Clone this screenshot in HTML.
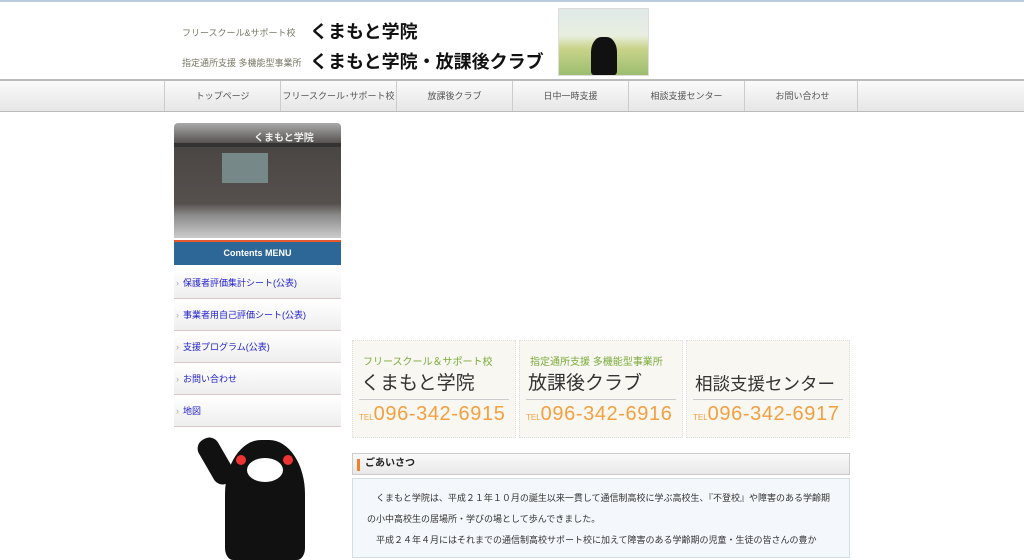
<!DOCTYPE html>
<html><head><meta charset="utf-8"><style>
*{margin:0;padding:0;box-sizing:border-box}
body{width:1024px;height:553px;overflow:hidden;background:#fff;font-family:"Liberation Sans","Noto Sans CJK JP",sans-serif;position:relative}
.a{position:absolute}
.nav{top:79px;left:0;width:1024px;height:33px;background:linear-gradient(#fafafa,#e6e6e6);border-top:2px solid #bbb;border-bottom:1px solid #bbb}
.nav div{position:absolute;top:0;height:30px;width:116px;border-left:1px solid #ccc;font-size:9px;color:#555;text-align:center;line-height:30px}
.mi{left:174px;width:167px;height:31px;background:linear-gradient(#fff,#eee);border-bottom:1px solid #d9c9c9;font-size:9px;color:#2222cc;line-height:30px;padding-left:9px}
.mi:before{content:"›";color:#aaa;position:absolute;left:2px;font-size:9px}
.box{top:340px;width:164px;height:98px;background:#f8f7f2;border:1px dotted #ddd}
.box .s{position:absolute;left:10px;top:12px;font-size:10px;color:#7aab3a}
.box .t{position:absolute;left:8px;top:27px;font-size:19px;color:#333}
.box .l{position:absolute;left:6px;right:6px;top:58px;border-top:1px solid #ccc}
.box .p{position:absolute;left:6px;top:62px;font-size:20px;color:#f5a040;letter-spacing:0.6px}
.box .p small{font-size:8px;letter-spacing:0}
</style></head><body>
<div class="a" style="top:0;left:0;width:1024px;height:2px;background:#bcd"></div>
<div class="a" style="left:182px;top:26px;font-size:9px;color:#776">フリースクール&amp;サポート校</div>
<div class="a" style="left:310px;top:18px;font-size:18px;font-weight:bold;color:#111">くまもと学院</div>
<div class="a" style="left:182px;top:56px;font-size:9px;color:#776">指定通所支援 多機能型事業所</div>
<div class="a" style="left:310px;top:48px;font-size:18px;font-weight:bold;color:#111">くまもと学院・放課後クラブ</div>
<div class="a" style="left:558px;top:8px;width:91px;height:68px;background:linear-gradient(#dfe9e8 0,#e8efe0 40%,#c9d48a 60%,#9cbd70 100%);border:1px solid #ddd">
<div class="a" style="left:32px;top:28px;width:26px;height:38px;background:#111;border-radius:40% 40% 10% 10%"></div></div>
<div class="a nav">
<div style="left:164px">トップページ</div><div style="left:280px">フリースクール･サポート校</div><div style="left:396px">放課後クラブ</div><div style="left:512px">日中一時支援</div><div style="left:628px">相談支援センター</div><div style="left:744px">お問い合わせ</div><div style="left:857px;width:1px"></div></div>
<div class="a" style="left:174px;top:123px;width:167px;height:115px;background:linear-gradient(#aaa 0,#4a4644 20%,#55504c 70%,#8a8a8a 80%,#ccc 100%);border-radius:4px 4px 0 0">
<div class="a" style="left:48px;top:30px;width:46px;height:30px;background:#788"></div>
<div class="a" style="left:0;top:20px;width:167px;height:4px;background:#333"></div>
<div class="a" style="left:80px;top:6px;font-size:10px;color:#eee;font-weight:bold">くまもと学院</div></div>
<div class="a" style="left:174px;top:240px;width:167px;height:25px;background:#2d6797;border-top:2px solid #e65a2e;color:#fff;font-size:9px;text-align:center;line-height:23px;font-weight:bold">Contents MENU</div>
<div class="a mi" style="top:268px">保護者評価集計シート(公表)</div>
<div class="a mi" style="top:300px">事業者用自己評価シート(公表)</div>
<div class="a mi" style="top:332px">支援プログラム(公表)</div>
<div class="a mi" style="top:364px">お問い合わせ</div>
<div class="a mi" style="top:396px">地図</div>
<div class="a" style="left:225px;top:440px;width:80px;height:120px;background:#111;border-radius:45% 45% 10% 10%"></div>
<div class="a" style="left:205px;top:436px;width:22px;height:50px;background:#111;border-radius:10px;transform:rotate(-30deg)"></div>
<div class="a" style="left:247px;top:458px;width:36px;height:24px;background:#fff;border-radius:50%"></div>
<div class="a" style="left:236px;top:455px;width:10px;height:10px;background:#e33;border-radius:50%"></div>
<div class="a" style="left:283px;top:455px;width:10px;height:10px;background:#e33;border-radius:50%"></div>
<div class="a box" style="left:352px"><div class="s">フリースクール＆サポート校</div><div class="t">くまもと学院</div><div class="l"></div><div class="p"><small>TEL</small>096-342-6915</div></div>
<div class="a box" style="left:519px"><div class="s">指定通所支援 多機能型事業所</div><div class="t">放課後クラブ</div><div class="l"></div><div class="p"><small>TEL</small>096-342-6916</div></div>
<div class="a box" style="left:686px"><div class="t" style="top:30px;font-size:17.5px">相談支援センター</div><div class="l"></div><div class="p"><small>TEL</small>096-342-6917</div></div>
<div class="a" style="left:352px;top:453px;width:498px;height:22px;background:linear-gradient(#fafafa,#e8e8e8);border:1px solid #ccc;font-size:10px;font-weight:bold;color:#222;line-height:20px;padding-left:12px">ごあいさつ<div class="a" style="left:4px;top:5px;width:3px;height:12px;background:#f08030"></div></div>
<div class="a" style="left:352px;top:478px;width:498px;height:80px;background:#f4f7fb;border:1px solid #d5dde5;font-size:9px;color:#333;line-height:21px;padding:9px 12px 0 14px">　くまもと学院は、平成２１年１０月の誕生以来一貫して通信制高校に学ぶ高校生、『不登校』や障害のある学齢期の小中高校生の居場所・学びの場として歩んできました。<br>　平成２４年４月にはそれまでの通信制高校サポート校に加えて障害のある学齢期の児童・生徒の皆さんの豊か</div>
</body></html>
